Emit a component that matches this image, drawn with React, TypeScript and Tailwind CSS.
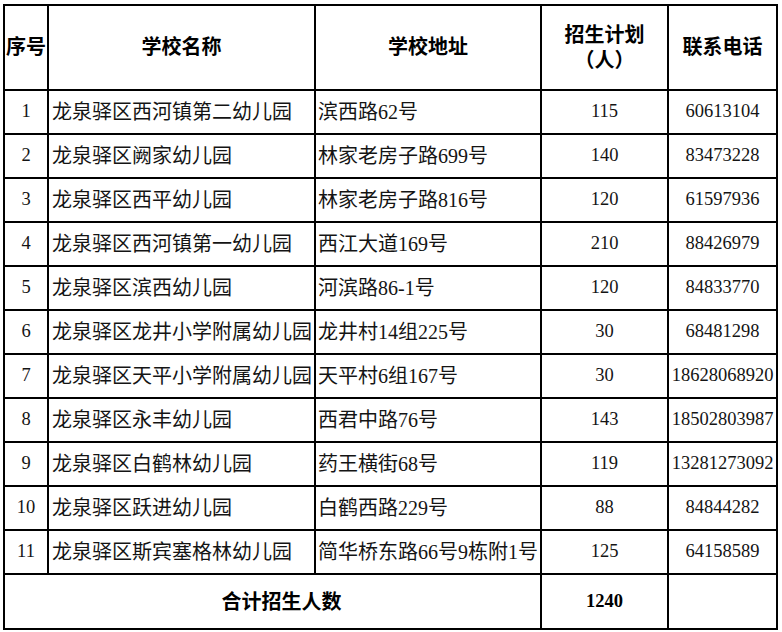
import React from "react"

type School = {
  no: number
  name: string
  address: string
  plan: number
  phone: string
}

const schools: School[] = [
  { no: 1, name: "龙泉驿区西河镇第二幼儿园", address: "滨西路62号", plan: 115, phone: "60613104" },
  { no: 2, name: "龙泉驿区阙家幼儿园", address: "林家老房子路699号", plan: 140, phone: "83473228" },
  { no: 3, name: "龙泉驿区西平幼儿园", address: "林家老房子路816号", plan: 120, phone: "61597936" },
  { no: 4, name: "龙泉驿区西河镇第一幼儿园", address: "西江大道169号", plan: 210, phone: "88426979" },
  { no: 5, name: "龙泉驿区滨西幼儿园", address: "河滨路86-1号", plan: 120, phone: "84833770" },
  { no: 6, name: "龙泉驿区龙井小学附属幼儿园", address: "龙井村14组225号", plan: 30, phone: "68481298" },
  { no: 7, name: "龙泉驿区天平小学附属幼儿园", address: "天平村6组167号", plan: 30, phone: "18628068920" },
  { no: 8, name: "龙泉驿区永丰幼儿园", address: "西君中路76号", plan: 143, phone: "18502803987" },
  { no: 9, name: "龙泉驿区白鹤林幼儿园", address: "药王横街68号", plan: 119, phone: "13281273092" },
  { no: 10, name: "龙泉驿区跃进幼儿园", address: "白鹤西路229号", plan: 88, phone: "84844282" },
  { no: 11, name: "龙泉驿区斯宾塞格林幼儿园", address: "简华桥东路66号9栋附1号", plan: 125, phone: "64158589" },
]

const cell = "bg-white flex items-center"
const head = "bg-white flex items-center justify-center font-bold text-[20px] text-black text-center leading-[25px]"

export default function App() {
  const total = schools.reduce((s, r) => s + r.plan, 0)

  return (
    <div className="bg-white w-[782px] h-[632px] pt-[4px] pl-[3px] font-['Liberation_Serif','Noto_Sans_CJK_SC',serif] text-[#141414]">
      <div className="grid w-[775px] grid-cols-[42px_265px_224px_125px_107px] grid-rows-[83px_repeat(11,42px)_53px] gap-[2px] bg-black p-[2px]">
        {/* HEADER */}
        <div className={head}>序号</div>
        <div className={head}>学校名称</div>
        <div className={head}>学校地址</div>
        <div className={`${head} flex-col`}>
          <span>招生计划</span>
          <span>（人）</span>
        </div>
        <div className={head}>联系电话</div>

        {/* ROWS */}
        {schools.map((r) => (
          <React.Fragment key={r.no}>
            <div className={`${cell} justify-center text-[18.5px]`}>{r.no}</div>
            <div className={`${cell} pl-[3px] text-[20px] whitespace-nowrap`}>{r.name}</div>
            <div className={`${cell} pl-[2px] text-[20px] whitespace-nowrap`}>{r.address}</div>
            <div className={`${cell} justify-center text-[18.5px]`}>{r.plan}</div>
            <div className={`${cell} justify-center text-[18.5px] whitespace-nowrap`}>{r.phone}</div>
          </React.Fragment>
        ))}

        {/* TOTAL */}
        <div className={`${cell} col-span-3 justify-center pl-[18px] font-bold text-[20px] text-black`}>
          合计招生人数
        </div>
        <div className={`${cell} justify-center font-bold text-[18.5px] text-black`}>{total}</div>
        <div className={cell}></div>
      </div>
    </div>
  )
}
